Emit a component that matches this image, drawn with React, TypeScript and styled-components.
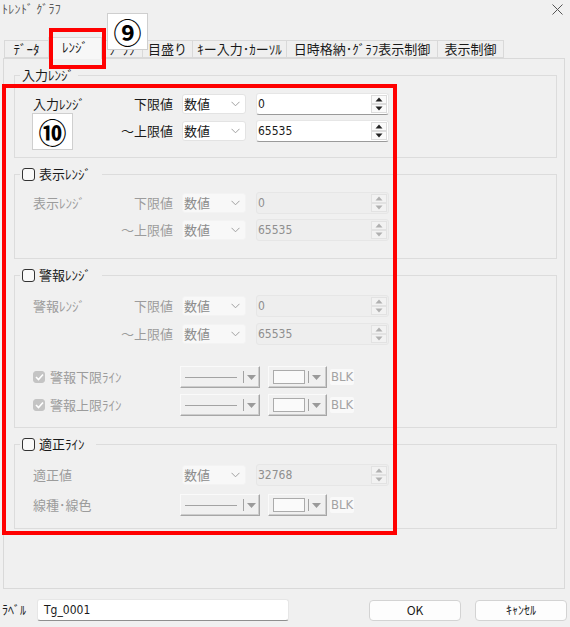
import React from "react";
import styled, { createGlobalStyle } from "styled-components";

const GlobalStyle = createGlobalStyle`
  html, body { margin: 0; padding: 0; background: #f0f0f0; }
  body { font-family: "Noto Sans CJK JP", "Noto Sans", sans-serif; }
  * { box-sizing: border-box; }
`;

const TEXT = "#1a1a1a";
const DIM = "#9c9c9c";
const NUM_FONT = `"DejaVu Sans Condensed", "Liberation Sans", sans-serif`;

const Window = styled.div`
  position: relative;
  width: 570px;
  height: 627px;
  background: #f0f0f0;
  display: flex;
  flex-direction: column;
  overflow: hidden;
  color: ${TEXT};
  font-size: 13px;
  line-height: 16px;
`;

const TitleBar = styled.div`
  height: 18px;
  display: flex;
  align-items: center;
  justify-content: space-between;
  padding: 0 7px 0 2px;
`;

const Title = styled.span`
  font-size: 12px;
  color: #5a5a5a;
  letter-spacing: 0.3px;
  white-space: pre;
`;

const TabStrip = styled.div`
  margin-top: 19px;
  height: 21px;
  display: flex;
  align-items: flex-end;
  padding-left: 5px;
`;

const Tab = styled.div<{ $w: number; $active?: boolean }>`
  position: relative;
  width: ${(p) => p.$w}px;
  height: ${(p) => (p.$active ? 22 : 18)}px;
  margin-bottom: ${(p) => (p.$active ? -1 : 0)}px;
  margin-left: -1px;
  z-index: ${(p) => (p.$active ? 2 : 1)};
  display: flex;
  align-items: center;
  justify-content: center;
  white-space: nowrap;
  border: 1px solid #d9d9d9;
  border-bottom: ${(p) => (p.$active ? "none" : "1px solid #d9d9d9")};
  background: ${(p) => (p.$active ? "#f7f7f7" : "#efefef")};
  font-size: 13px;
  padding-bottom: ${(p) => (p.$active ? 3 : 0)}px;
`;

const Panel = styled.div`
  margin: 0 5px 0 3px;
  height: 531px;
  border: 1px solid #d9d9d9;
  background: #f0f0f0;
  padding: 8px 7px 0 10px;
  display: flex;
  flex-direction: column;
  gap: 8px;
`;

const Group = styled.fieldset`
  margin: 0;
  padding: 0;
  border: 1px solid #dcdcdc;
  min-width: 0;
`;

const Legend = styled.legend<{ $wide?: boolean }>`
  margin-left: 5px;
  padding: 0 ${(p) => (p.$wide ? 11 : 4)}px 0 2px;
  height: 16px;
  line-height: 16px;
  display: flex;
  align-items: center;
  gap: 4px;
  font-size: 13px;
  color: ${TEXT};
`;

const GroupBody = styled.div<{ $pt: number; $pb: number }>`
  padding: ${(p) => p.$pt}px 0 ${(p) => p.$pb}px 18px;
  display: flex;
  flex-direction: column;
`;

const Row = styled.div<{ $mt?: number }>`
  display: flex;
  align-items: center;
  height: 22px;
  margin-top: ${(p) => p.$mt ?? 0}px;
`;

const MainLabel = styled.span<{ $dim?: boolean }>`
  width: 88px;
  white-space: nowrap;
  color: ${(p) => (p.$dim ? DIM : TEXT)};
`;

const SubLabel = styled.span<{ $dim?: boolean }>`
  width: 52px;
  text-align: right;
  white-space: nowrap;
  color: ${(p) => (p.$dim ? DIM : TEXT)};
`;

const LeadCell = styled.span<{ $dim?: boolean }>`
  width: 147px;
  display: flex;
  align-items: center;
  gap: 5px;
  white-space: nowrap;
  color: ${(p) => (p.$dim ? DIM : TEXT)};
`;

const Select = styled.div<{ $dim?: boolean }>`
  margin-left: 9px;
  width: 64px;
  height: 20px;
  display: flex;
  align-items: center;
  justify-content: space-between;
  padding: 0 5px 0 1px;
  background: ${(p) => (p.$dim ? "#f8f8f8" : "#ffffff")};
  border: 1px solid ${(p) => (p.$dim ? "#f3f3f3" : "#e3e3e3")};
  border-radius: 3px;
  color: ${(p) => (p.$dim ? "#8c8c8c" : TEXT)};
`;

const Spin = styled.div<{ $dim?: boolean }>`
  margin-left: 10px;
  width: 133px;
  height: 22px;
  display: flex;
  align-items: center;
  justify-content: space-between;
  padding: 0 1px 0 1px;
  background: ${(p) => (p.$dim ? "#eeeeee" : "#ffffff")};
  border: 1px solid #e6e6e6;
  border-bottom-color: ${(p) => (p.$dim ? "#e6e6e6" : "#9a9a9a")};
  border-radius: 3px;
  color: ${(p) => (p.$dim ? "#8f8f8f" : TEXT)};
  font-family: ${NUM_FONT};
  font-size: 12px;
`;

const StyleDrop = styled.div<{ $w: number; $ml: number }>`
  margin-left: ${(p) => p.$ml}px;
  width: ${(p) => p.$w}px;
  height: 22px;
  display: flex;
  align-items: center;
  padding: 0 3px 0 4px;
  background: #f0f0f0;
  border: 1px solid;
  border-color: #fafafa #a6a6a6 #a6a6a6 #fafafa;
  box-shadow: inset -1px -1px 0 #cdcdcd;
`;

const LineSample = styled.span`
  flex: 1;
  height: 1px;
  background: #a3a3a3;
  margin-right: 6px;
`;

const Swatch = styled.span`
  width: 32px;
  height: 14px;
  background: #fafafa;
  border: 1px solid #ababab;
  margin-right: 3px;
`;

const Sep = styled.span`
  width: 1px;
  height: 12px;
  background: #a3a3a3;
  margin-right: 3px;
`;

const Blk = styled.span`
  margin-left: 3px;
  height: 16px;
  padding: 0 1px;
  display: flex;
  align-items: center;
  background: #f9f9f9;
  border-radius: 2px;
  color: #a3a3a3;
  font-family: ${NUM_FONT};
  font-size: 13px;
`;

const Box = styled.span<{ $checked?: boolean; $dim?: boolean }>`
  width: ${(p) => (p.$dim ? 12 : 13)}px;
  height: ${(p) => (p.$dim ? 12 : 13)}px;
  flex: none;
  display: inline-flex;
  align-items: center;
  justify-content: center;
  border-radius: 3px;
  border: 1px solid ${(p) => (p.$dim ? "#c4c4c4" : "#333333")};
  background: ${(p) => (p.$checked ? "#c4c4c4" : "#f9f9f9")};
`;

const BottomBar = styled.div`
  margin-top: 10px;
  height: 22px;
  display: flex;
  align-items: center;
  padding: 0 3px 0 2px;
`;

const BottomLabel = styled.span`
  width: 35px;
  font-size: 12px;
`;

const NameInput = styled.div`
  width: 252px;
  height: 22px;
  display: flex;
  align-items: center;
  padding-left: 6px;
  background: #ffffff;
  border: 1px solid #e6e6e6;
  border-bottom-color: #8f8f8f;
  border-radius: 3px;
  font-family: ${NUM_FONT};
  font-size: 12px;
`;

const Button = styled.div<{ $ml: number }>`
  margin-left: ${(p) => p.$ml}px;
  width: 92px;
  height: 21px;
  display: flex;
  align-items: center;
  justify-content: center;
  background: #fdfdfd;
  border: 1px solid #d3d3d3;
  border-radius: 4px;
  font-size: 12px;
`;

const RedFrame = styled.div<{ $x: number; $y: number; $w: number; $h: number }>`
  position: absolute;
  left: ${(p) => p.$x}px;
  top: ${(p) => p.$y}px;
  width: ${(p) => p.$w}px;
  height: ${(p) => p.$h}px;
  border: 4px solid #ff0000;
  z-index: 5;
  pointer-events: none;
`;

const Badge = styled.div<{ $x: number; $y: number }>`
  position: absolute;
  left: ${(p) => p.$x}px;
  top: ${(p) => p.$y}px;
  width: 41px;
  height: 37px;
  background: #ffffff;
  border: 1px solid #cfcfcf;
  display: flex;
  align-items: center;
  justify-content: center;
  font-size: 28px;
  font-weight: 700;
  line-height: 1;
  color: #000;
  z-index: 6;
`;

const Chevron = () => (
  <svg width="9" height="6" viewBox="0 0 9 6">
    <polyline points="0.5,0.8 4.5,4.8 8.5,0.8" fill="none" stroke="#a0a0a0" strokeWidth="1" />
  </svg>
);

const SpinArrows = ({ dim }: { dim?: boolean }) => {
  const c = dim ? "#b0b0b0" : "#222";
  const edge = dim ? "#e2e2e2" : "#dcdcdc";
  return (
    <svg width="16" height="18" viewBox="0 0 16 18">
      <rect x="0.5" y="0.5" width="15" height="8" fill={dim ? "#f2f2f2" : "#fafafa"} stroke={edge} />
      <rect x="0.5" y="9.5" width="15" height="8" fill={dim ? "#f2f2f2" : "#fafafa"} stroke={edge} />
      <polygon points="4.5,6.5 8,2.5 11.5,6.5" fill={c} />
      <polygon points="4.5,11.5 11.5,11.5 8,15.5" fill={c} />
    </svg>
  );
};

const Caret = () => (
  <svg width="9" height="5" viewBox="0 0 9 5">
    <polygon points="0,0 9,0 4.5,5" fill="#9a9a9a" />
  </svg>
);

const Tick = () => (
  <svg width="9" height="8" viewBox="0 0 9 8">
    <polyline points="1,4 3.5,6.5 8,1.5" fill="none" stroke="#ffffff" strokeWidth="1.6" />
  </svg>
);

const CloseIcon = () => (
  <svg width="11" height="11" viewBox="0 0 11 11">
    <line x1="0.5" y1="0.5" x2="10.5" y2="10.5" stroke="#555" strokeWidth="1" />
    <line x1="10.5" y1="0.5" x2="0.5" y2="10.5" stroke="#555" strokeWidth="1" />
  </svg>
);

type RangeRowProps = { main?: string; sub: string; value: string; dim?: boolean; mt?: number };

const RangeRow = ({ main, sub, value, dim, mt }: RangeRowProps) => (
  <Row $mt={mt}>
    <MainLabel $dim={dim}>{main ?? ""}</MainLabel>
    <SubLabel $dim={dim}>{sub}</SubLabel>
    <Select $dim={dim}>
      <span>数値</span>
      <Chevron />
    </Select>
    <Spin $dim={dim}>
      <span>{value}</span>
      <SpinArrows dim={dim} />
    </Spin>
  </Row>
);

const StyleControls = () => (
  <>
    <StyleDrop $w={80} $ml={0}>
      <LineSample />
      <Sep />
      <Caret />
    </StyleDrop>
    <StyleDrop $w={59} $ml={8}>
      <Swatch />
      <Sep />
      <Caret />
    </StyleDrop>
    <Blk>BLK</Blk>
  </>
);

const tabs = [
  { label: "ﾃﾞｰﾀ", w: 45 },
  { label: "ﾚﾝｼﾞ", w: 54, active: true },
  { label: "ｸﾞﾗﾌ", w: 42 },
  { label: "目盛り", w: 51 },
  { label: "ｷー入力･ｶーｿﾙ", w: 95 },
  { label: "日時格納･ｸﾞﾗﾌ表示制御", w: 152 },
  { label: "表示制御", w: 67 },
];

export default function App() {
  return (
    <>
      <GlobalStyle />
      <Window>
        <TitleBar>
          <Title>ﾄﾚﾝﾄﾞ ｸﾞﾗﾌ</Title>
          <CloseIcon />
        </TitleBar>

        <TabStrip>
          {tabs.map((t) => (
            <Tab key={t.label} $w={t.w} $active={t.active}>
              {t.label}
            </Tab>
          ))}
        </TabStrip>

        <Panel>
          <Group>
            <Legend>入力ﾚﾝｼﾞ</Legend>
            <GroupBody $pt={10} $pb={15}>
              <RangeRow main="入力ﾚﾝｼﾞ" sub="下限値" value="0" />
              <RangeRow sub="～上限値" value="65535" mt={5} />
            </GroupBody>
          </Group>

          <Group>
            <Legend $wide>
              <Box />
              表示ﾚﾝｼﾞ
            </Legend>
            <GroupBody $pt={10} $pb={17}>
              <RangeRow main="表示ﾚﾝｼﾞ" sub="下限値" value="0" dim />
              <RangeRow sub="～上限値" value="65535" dim mt={5} />
            </GroupBody>
          </Group>

          <Group>
            <Legend $wide>
              <Box />
              警報ﾚﾝｼﾞ
            </Legend>
            <GroupBody $pt={12} $pb={11}>
              <RangeRow main="警報ﾚﾝｼﾞ" sub="下限値" value="0" dim />
              <RangeRow sub="～上限値" value="65535" dim mt={6} />
              <Row $mt={21}>
                <LeadCell $dim>
                  <Box $checked $dim>
                    <Tick />
                  </Box>
                  警報下限ﾗｲﾝ
                </LeadCell>
                <StyleControls />
              </Row>
              <Row $mt={6}>
                <LeadCell $dim>
                  <Box $checked $dim>
                    <Tick />
                  </Box>
                  警報上限ﾗｲﾝ
                </LeadCell>
                <StyleControls />
              </Row>
            </GroupBody>
          </Group>

          <Group>
            <Legend $wide>
              <Box />
              適正ﾗｲﾝ
            </Legend>
            <GroupBody $pt={12} $pb={12}>
              <RangeRow main="適正値" sub="" value="32768" dim />
              <Row $mt={8}>
                <LeadCell $dim>線種･線色</LeadCell>
                <StyleControls />
              </Row>
            </GroupBody>
          </Group>
        </Panel>

        <BottomBar>
          <BottomLabel>ﾗﾍﾞﾙ</BottomLabel>
          <NameInput>Tg_0001</NameInput>
          <Button $ml={80}>OK</Button>
          <Button $ml={14}>ｷｬﾝｾﾙ</Button>
        </BottomBar>

        <RedFrame $x={49} $y={28} $w={57} $h={41} />
        <RedFrame $x={2} $y={84} $w={395} $h={451} />
        <Badge $x={107} $y={13}>⑨</Badge>
        <Badge $x={32} $y={113}>⑩</Badge>
      </Window>
    </>
  );
}
